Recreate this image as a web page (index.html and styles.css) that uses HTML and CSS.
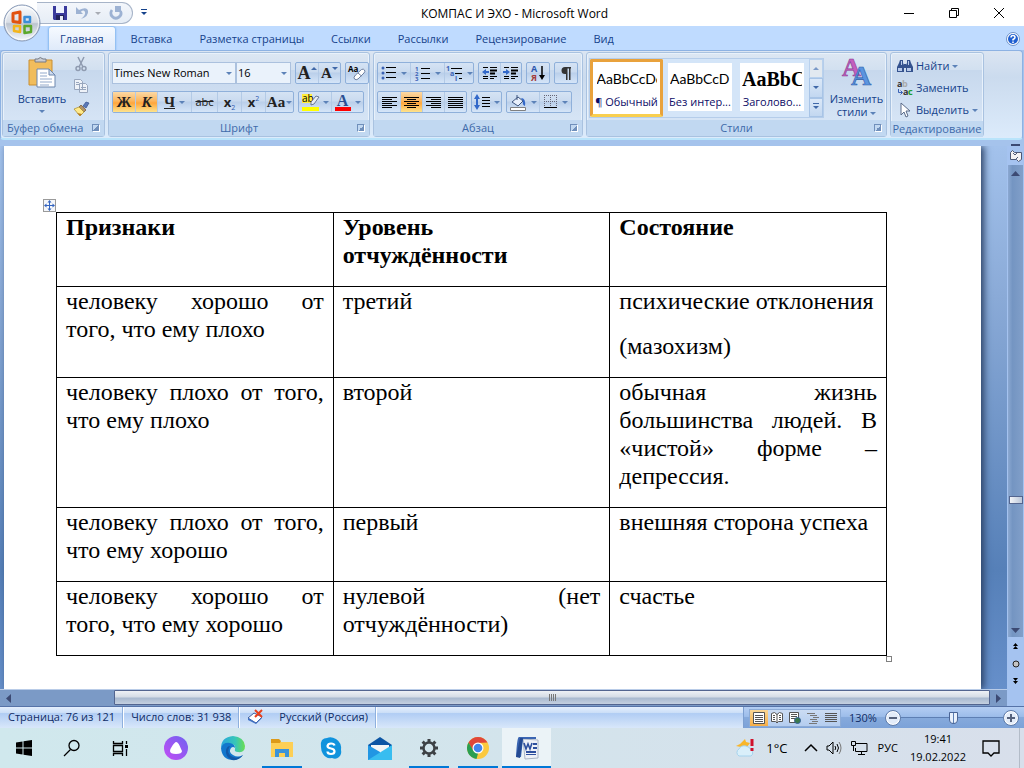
FILE: index.html
```
<!DOCTYPE html>
<html lang="ru">
<head>
<meta charset="UTF-8">
<meta name="viewport" content="width=device-width, initial-scale=1.0">
<title>КОМПАС И ЭХО - Microsoft Word</title>
<link rel="stylesheet" href="styles.css">
</head>
<body>

<header class="titlebar">
  <button class="office-button" aria-label="Кнопка Office">
    <svg width="38" height="38" viewBox="0 0 38 38">
      <defs>
        <linearGradient id="orb" x1="0" y1="0" x2="0" y2="1">
          <stop offset="0" stop-color="#fafcfe"/><stop offset=".48" stop-color="#d9dee6"/>
          <stop offset=".52" stop-color="#bcc4d0"/><stop offset="1" stop-color="#f4f7fb"/>
        </linearGradient>
      </defs>
      <circle cx="19" cy="19" r="18" fill="url(#orb)" stroke="#8496b4"/>
      <circle cx="19" cy="19" r="16.500" fill="none" stroke="#fff" opacity=".7"/>
      <g fill="none" stroke-width="3" stroke-linejoin="round">
        <path d="M10 9.500l7-1.500v10.500l-7-1z" stroke="#e2520f"/>
        <path d="M21.500 13h5.500v5h-5.500z" stroke="#3c8ed8" stroke-width="2.500"/>
        <path d="M11 22h6v6l-6-1z" stroke="#f3b51b" stroke-width="2.500"/>
        <path d="M21.500 22h6.500v6l-6.500 1z" stroke="#5ba82c" stroke-width="2.500"/>
      </g>
    </svg>
  </button>
  <div class="quick-access">
    <button aria-label="Сохранить">
      <svg width="14" height="14" viewBox="0 0 14 14"><path d="M0 0h14v14H1L0 13z" fill="#3a3a9c"/><path d="M3 0h8v7H3z" fill="#eef2ff"/><path d="M3 9h8v5H3z" fill="#23235c"/><path d="M7 10h3v4H7z" fill="#e8ecf8"/></svg>
    </button>
    <button aria-label="Отменить">
      <svg width="14" height="14" viewBox="0 0 14 14"><path d="M1 1v7h7L5.800 5.800Q9 3 10 6T6 13Q14 10 13 5T4 4z" fill="#9db2d3"/></svg>
      <span class="arrow pale"></span>
    </button>
    <button aria-label="Вернуть">
      <svg width="14" height="14" viewBox="0 0 14 14"><path d="M11.500 5A5 5 0 1 1 3 4" fill="none" stroke="#9db2d3" stroke-width="2.800"/><path d="M6 0h6v6H6z" fill="#9db2d3"/></svg>
    </button>
  </div>
  <button class="customize" aria-label="Настройка панели"><span class="arrow"></span></button>
  <h1>КОМПАС И ЭХО - Microsoft Word</h1>
  <div class="window-buttons">
    <button aria-label="Свернуть"><svg width="10" height="10"><path d="M0 5.500h10" stroke="#000"/></svg></button>
    <button aria-label="Развернуть"><svg width="10" height="10" fill="none" stroke="#000"><path d="M.5 2.500h7v7h-7zM2.500 2.500v-2h7v7h-2"/></svg></button>
    <button aria-label="Закрыть"><svg width="10" height="10"><path d="M0 0l10 10M10 0L0 10" stroke="#000"/></svg></button>
  </div>
</header>

<nav class="tabs">
  <a href="#" class="active">Главная</a>
  <a href="#">Вставка</a>
  <a href="#">Разметка страницы</a>
  <a href="#">Ссылки</a>
  <a href="#">Рассылки</a>
  <a href="#">Рецензирование</a>
  <a href="#">Вид</a>
  <button class="help" aria-label="Справка"><svg width="14" height="14" viewBox="0 0 14 14"><circle cx="7" cy="7" r="6.500" fill="#fff" stroke="#6f93c9"/><circle cx="7" cy="7" r="5" fill="#1f5fd0"/><path d="M5 5.500Q5 3.500 7 3.500T9 5.500Q9 6.500 7 7.500V8.500M7 9.500v1.500" fill="none" stroke="#fff" stroke-width="1.500"/></svg></button>
</nav>

<div class="ribbon">
  <section class="group clipboard">
    <div class="group-body">
      <button class="big">
        <svg width="28" height="31" viewBox="0 0 28 31"><path d="M1 3h23v25H1z" fill="#f1bd5c" stroke="#c98f32"/><path d="M7 5V2h3q2-3 5 0h3v3z" fill="#c9ccd2" stroke="#767b85"/><path d="M9 12h12l6 6v12H9z" fill="#fff" stroke="#6d87ae"/><path d="M21 12v6h6z" fill="#cfdcef" stroke="#6d87ae"/><path d="M12 16h7M12 19h7M12 22h12M12 25h12M12 28h9" stroke="#92a9cb"/></svg>
        <span>Вставить</span>
        <span class="arrow"></span>
      </button>
      <div class="stack">
        <button aria-label="Вырезать"><svg width="16" height="16" viewBox="0 0 16 16" fill="none" stroke="#8f9bb0" stroke-width="1.500"><path d="M5 1l5 10M11 1L6 11"/><circle cx="5" cy="12.500" r="2"/><circle cx="11" cy="12.500" r="2"/></svg></button>
        <button aria-label="Копировать"><svg width="16" height="16" viewBox="0 0 16 16" fill="#eef2f8" stroke="#98a6bd"><path d="M1.500 1.500h6l2 2v8h-8zM6.500 5.500h6l2 2v7h-8z"/><path d="M3 4.500h3M3 6.500h3M8 9.500h5M8 11.500h5"/></svg></button>
        <button aria-label="Формат по образцу"><svg width="16" height="16" viewBox="0 0 16 16"><path d="M10 5l3-4 3 1-3 5z" fill="#5b79b8" stroke="#34508c" stroke-width=".7"/><path d="M8 4l5 5-2 2-5-5z" fill="#b0926a" stroke="#77552a" stroke-width=".7"/><path d="M6 6l5 5-4 4-6-7z" fill="#ffe98a" stroke="#a98b22" stroke-width=".7"/><path d="M3 11l4 4 2-2-5-1z" fill="#b47b22"/></svg></button>
      </div>
    </div>
    <h2>Буфер обмена<button class="launcher" aria-label="Параметры буфера обмена"></button></h2>
  </section>

  <section class="group font">
    <div class="group-body rows">
      <div class="row">
        <div class="combos">
          <span class="combo name"><select aria-label="Шрифт"><option>Times New Roman</option></select></span>
          <span class="combo size"><select aria-label="Размер шрифта"><option>16</option></select></span>
        </div>
        <div class="set">
          <button class="serif" aria-label="Увеличить размер"><b class="grow">A</b><i class="tri up"></i></button>
          <button class="serif" aria-label="Уменьшить размер"><b>A</b><i class="tri down"></i></button>
        </div>
        <div class="set">
          <button aria-label="Очистить формат"><svg width="18" height="18" viewBox="0 0 18 18"><path d="M7.500 11l6-5.500q2-1 3 .5t-.5 3L10 15q-2 1.500-3.500 0T7.500 11z" fill="#fff" stroke="#6d7f9f"/><path d="M10 9l3.500 3" stroke="#6d7f9f"/><text x="0" y="8" font-size="8" font-weight="700">Aa</text></svg></button>
        </div>
      </div>
      <div class="row">
        <div class="set">
          <button class="serif on"><b>Ж</b></button>
          <button class="serif on"><b><em>К</em></b></button>
          <button class="serif w34"><b><u>Ч</u></b><span class="arrow"></span></button>
          <button class="w26"><s>abc</s></button>
          <button class="w25" aria-label="Подстрочный знак"><b>x</b><sub>2</sub></button>
          <button class="w25" aria-label="Надстрочный знак"><b>x</b><sup>2</sup></button>
          <button class="serif case"><b>Aa</b><span class="arrow"></span></button>
        </div>
        <div class="set">
          <button class="w33" aria-label="Цвет выделения"><svg width="17" height="17" viewBox="0 0 17 17"><path d="M0 0h10v9H0z" fill="#ffee3c"/><text x="0" y="8" font-size="10">ab</text><path d="M9 8l5-6 3 1-5 7-3 1z" fill="#e9eef7" stroke="#52607c" stroke-width=".8"/><path d="M0 13h17v4H0z" fill="#ff0"/></svg><span class="arrow"></span></button>
          <button class="w33 font-color" aria-label="Цвет текста"><b>A</b><span class="arrow"></span></button>
        </div>
      </div>
    </div>
    <h2>Шрифт<button class="launcher" aria-label="Параметры шрифта"></button></h2>
  </section>

  <section class="group paragraph">
    <div class="group-body rows">
      <div class="row">
        <div class="set">
          <button class="w33" aria-label="Маркеры"><svg width="16" height="14" viewBox="0 0 16 14"><g fill="#3b62b5"><circle cx="2" cy="2" r="1.500"/><circle cx="2" cy="7" r="1.500"/><circle cx="2" cy="12" r="1.500"/></g><path d="M5 1.500h10M5 6.500h10M5 11.500h10" stroke="#000"/></svg><span class="arrow"></span></button>
          <button class="w34" aria-label="Нумерация"><svg width="16" height="15" viewBox="0 0 16 15"><g fill="#3b62b5" font-size="6" font-weight="700"><text x="0" y="5">1</text><text x="0" y="10">2</text><text x="0" y="15">3</text></g><path d="M6 2.500h9M6 7.500h9M6 12.500h9" stroke="#000"/></svg><span class="arrow"></span></button>
          <button class="w30" aria-label="Многоуровневый список"><svg width="17" height="15" viewBox="0 0 17 15"><g fill="#3b62b5" font-size="7" font-weight="700"><text x="0" y="5">1</text><text x="4" y="10">a</text><text x="9" y="15">i</text></g><path d="M5 2.500h11M9 7.500h7M13 12.500h3" stroke="#000"/></svg><span class="arrow"></span></button>
        </div>
        <div class="set">
          <button class="w22" aria-label="Уменьшить отступ"><svg width="16" height="14" viewBox="0 0 16 14"><path d="M1 1.500h5M8 1.500h7M8 10.500h7M1 10.500h5M8 12.500h4M1 12.500h5" stroke="#000"/><path d="M8 4.500h7M8 7.500h5" stroke="#000" stroke-width="2"/><path d="M7 5H4V3L0 6l4 3V7h3z" fill="#3268c9"/></svg></button>
          <button class="w22" aria-label="Увеличить отступ"><svg width="16" height="14" viewBox="0 0 16 14"><path d="M1 1.500h5M8 1.500h7M8 10.500h7M1 10.500h5M8 12.500h4M1 12.500h5" stroke="#000"/><path d="M8 4.500h7M8 7.500h5" stroke="#000" stroke-width="2"/><path d="M0 5h3V3l4 3-4 3V7H0z" fill="#3268c9"/></svg></button>
        </div>
        <div class="set">
          <button aria-label="Сортировка"><svg width="16" height="18" viewBox="0 0 16 18" font-weight="700"><text x="1" y="8" font-size="9" fill="#2c58ae">A</text><text x="1" y="17" font-size="9" fill="#a33c3c">Я</text><path d="M12 2v10" stroke="#000" stroke-width="1.500"/><path d="M9 11h6l-3 5z"/></svg></button>
        </div>
        <div class="set">
          <button aria-label="Знаки абзаца"><svg width="12" height="14" viewBox="0 0 12 14"><path d="M11 1H5a3.500 3.500 0 0 0 0 7h1v6h1.500V2.500H9V14h1.500V2.500H11z" fill="#333"/></svg></button>
        </div>
      </div>
      <div class="row">
        <div class="set">
          <button aria-label="По левому краю"><svg width="15" height="13" stroke="#000"><path d="M0 1.500h15M0 3.500h10M0 5.500h15M0 7.500h10M0 9.500h15M0 11.500h10"/></svg></button>
          <button class="on" aria-label="По центру"><svg width="15" height="13" stroke="#000"><path d="M0 1.500h15M3 3.500h9M0 5.500h15M3 7.500h9M0 9.500h15M3 11.500h9"/></svg></button>
          <button aria-label="По правому краю"><svg width="15" height="13" stroke="#000"><path d="M0 1.500h15M5 3.500h10M0 5.500h15M5 7.500h10M0 9.500h15M5 11.500h10"/></svg></button>
          <button aria-label="По ширине"><svg width="15" height="13" stroke="#000"><path d="M0 1.500h15M0 3.500h15M0 5.500h15M0 7.500h15M0 9.500h15M0 11.500h15"/></svg></button>
        </div>
        <div class="set">
          <button class="w30" aria-label="Междустрочный интервал"><svg width="16" height="16" viewBox="0 0 16 16"><path d="M3 0l3 5H4v6h2l-3 5-3-5h2V5H0z" fill="#3268c9"/><path d="M8 3.500h8M8 6.500h8M8 9.500h8M8 12.500h8" stroke="#000"/></svg><span class="arrow"></span></button>
        </div>
        <div class="set">
          <button class="w33" aria-label="Заливка"><svg width="17" height="17" viewBox="0 0 17 17"><path d="M2 8l6-5 5 4-5 5z" fill="#e9f0fb" stroke="#3d557f"/><path d="M7 6V1" stroke="#3d557f"/><path d="M11 4q5 0 4 8-3-1-2-5z" fill="#3268c9"/><path d="M.5 13.500h15v3H.5z" fill="#fff" stroke="#808080"/></svg><span class="arrow"></span></button>
          <button class="w33" aria-label="Границы"><svg width="14" height="14"><path d="M.5 0v12M6.500 0v12M12.500 0v12M0 .5h13M0 6.500h13" stroke="#667" stroke-dasharray="1 1"/><path d="M0 12.500h13" stroke="#000"/></svg><span class="arrow"></span></button>
        </div>
      </div>
    </div>
    <h2>Абзац<button class="launcher" aria-label="Параметры абзаца"></button></h2>
  </section>

  <section class="group styles">
    <div class="group-body">
      <div class="gallery">
        <button class="style selected"><span class="sample">AaBbCcDc</span><span>¶ Обычный</span></button>
        <button class="style"><span class="sample">AaBbCcD</span><span>Без интер...</span></button>
        <button class="style"><span class="sample heading">AaBbC</span><span>Заголово...</span></button>
        <div class="gallery-scroll">
          <button disabled aria-label="Вверх"><i class="tri up"></i></button>
          <button aria-label="Вниз"><i class="tri down"></i></button>
          <button class="more" aria-label="Ещё"><i class="tri down"></i></button>
        </div>
      </div>
      <button class="big change">
        <svg width="30" height="29" viewBox="0 0 30 29" font-family="Liberation Serif" font-weight="700"><text x="0" y="19" font-size="26" fill="#c45fbd" stroke="#8a3b92" stroke-width=".6">A</text><text x="9" y="28" font-size="28" fill="#5b94e0" stroke="#2b5aa8" stroke-width=".6">A</text></svg>
        <span>Изменить<br>стили <span class="arrow"></span></span>
      </button>
    </div>
    <h2>Стили<button class="launcher" aria-label="Окно стилей"></button></h2>
  </section>

  <section class="group editing">
    <div class="group-body">
      <button><svg width="16" height="16" viewBox="0 0 16 16"><path d="M3 2h3v3l1 2v7H0V9l2-4zM10 2h3l1 3 2 4v5H9V7l1-2z" fill="#35538f"/><path d="M7 6h2v4H7z" fill="#35538f"/><path d="M1 10h4v3H1zM10 10h4v3h-4zM4 3h1v4H4zM11 3h1v4h-1z" fill="#b8caea"/></svg>Найти <span class="arrow"></span></button>
      <button><svg width="16" height="16" viewBox="0 0 16 16" font-size="9" font-weight="700"><text x="0" y="7" fill="#333">a</text><text x="5" y="7" fill="#aaa">b</text><text x="6" y="15" fill="#333">a</text><text x="11" y="15" fill="#1a9a2a">c</text><path d="M1.500 9v3.500h4M3.500 10.500l2 2-2 2" fill="none" stroke="#3b62b5"/></svg>Заменить</button>
      <button><svg width="16" height="16" viewBox="0 0 16 16"><path d="M4 1v12l3-3 2 5 2-1-2-5h4z" fill="#fff" stroke="#5b6b88"/></svg>Выделить <span class="arrow"></span></button>
    </div>
    <h2>Редактирование</h2>
  </section>
</div>

<main class="workspace">
  <div class="document">
    <article class="page">
      <div class="table-wrap">
        <span class="move-handle"><svg width="11" height="11" viewBox="0 0 11 11"><path d="M5.500 1v9M1 5.500h9" stroke="#3465c0"/><path d="M5.500 0l2 2.500h-4zM5.500 11l2-2.500h-4zM0 5.500l2.500-2v4zM11 5.500l-2.500-2v4z" fill="#3465c0"/></svg></span>
        <table>
          <thead>
            <tr>
              <th><p>Признаки</p></th>
              <th><p>Уровень отчуждённости</p></th>
              <th><p>Состояние</p></th>
            </tr>
          </thead>
          <tbody>
            <tr>
              <td><p>человеку хорошо от того, что ему плохо</p></td>
              <td><p>третий</p></td>
              <td><p>психические отклонения</p><p>(мазохизм)</p></td>
            </tr>
            <tr>
              <td><p>человеку плохо от того, что ему плохо</p></td>
              <td><p>второй</p></td>
              <td><p>обычная жизнь большинства людей. В «чистой» форме – депрессия.</p></td>
            </tr>
            <tr>
              <td><p>человеку плохо от того, что ему хорошо</p></td>
              <td><p>первый</p></td>
              <td><p>внешняя сторона успеха</p></td>
            </tr>
            <tr>
              <td><p>человеку хорошо от того, что ему хорошо</p></td>
              <td><p>нулевой (нет отчуждённости)</p></td>
              <td><p>счастье</p></td>
            </tr>
          </tbody>
        </table>
        <span class="size-handle"></span>
      </div>
    </article>
  </div>

  <div class="hscroll">
    <button aria-label="Влево"><svg width="5" height="9"><path d="M5 0v9L0 4.500z" fill="#3c4a73"/></svg></button>
    <div class="htrack"><div class="hthumb"></div></div>
    <button aria-label="Вправо"><svg width="5" height="9"><path d="M0 0v9l5-4.500z" fill="#3c4a73"/></svg></button>
  </div>

  <div class="vscroll">
    <span class="splitter"></span>
    <button class="ruler" aria-label="Линейка"><svg width="12" height="12" viewBox="0 0 12 12"><path d="M.5 2.500l2-2 2 2h7v7l-3 2-2-2h-6z" fill="#f4f2f4" stroke="#4d5876"/><path d="M3 3l2 2 2-2M6 9l2-2" fill="none" stroke="#4d5876"/></svg></button>
    <div class="vtrack">
      <svg width="9" height="5"><path d="M0 5h9L4.500 0z" fill="#3c4a73"/></svg>
      <div class="vthumb"></div>
      <svg class="down" width="9" height="5"><path d="M0 0h9L4.500 5z" fill="#3c4a73"/></svg>
    </div>
    <div class="browse">
      <button aria-label="Предыдущая страница"><svg width="5" height="7"><path d="M2.500 0L5 3H0zM2.500 3L5 6H0z"/></svg></button>
      <button aria-label="Выбор объекта"><svg width="8" height="8"><circle cx="4" cy="4" r="3" fill="#c4c4c4" stroke="#222"/></svg></button>
      <button aria-label="Следующая страница"><svg width="5" height="7"><path d="M2.500 4L5 1H0zM2.500 7L5 4H0z"/></svg></button>
    </div>
  </div>
</main>

<footer class="statusbar">
  <span class="cell">Страница: 76 из 121</span>
  <span class="cell">Число слов: 31 938</span>
  <span class="cell language">
    <svg width="17" height="15" viewBox="0 0 17 15"><path d="M1 9l6-5 8 4-6 6z" fill="#fff" stroke="#3d5d9e"/><path d="M1 9v2l8 4 6-6V8l-6 6z" fill="#3d6fc4"/><path d="M8 1l7 7M15 1L8 8" stroke="#e8401c" stroke-width="2"/></svg>
    Русский (Россия)
  </span>
  <div class="status-right">
    <div class="views">
      <button class="on" aria-label="Разметка страницы"><svg width="12" height="12" fill="#fff" stroke="#555"><path d="M.5.5h11v11H.5zM2 3.500h8M2 5.500h8M2 7.500h8M2 9.500h8"/></svg></button>
      <button aria-label="Режим чтения"><svg width="12" height="12" fill="#fff" stroke="#555"><path d="M.5 1.500l3-1 2.500 2 2.500-2 3 1v8h-4L6 11 4.500 9.500h-4zM6 2v9M2 3.500h2M2 5.500h2M2 7.500h2M8 3.500h2M8 5.500h2M8 7.500h2"/></svg></button>
      <button aria-label="Веб-документ"><svg width="12" height="12"><path d="M.5.5h9v10h-9zM2 2.500h6M2 4.500h6M2 6.500h4" fill="#fff" stroke="#555"/><circle cx="8.500" cy="8.500" r="3" fill="#3b7a4d" stroke="#34609a"/></svg></button>
      <button aria-label="Структура"><svg width="12" height="12" stroke="#777"><path d="M0 1.500h8M3 3.500h7M6 5.500h6M3 7.500h7M5 9.500h6M2 11.500h8"/></svg></button>
      <button aria-label="Черновик"><svg width="12" height="12" stroke="#555"><path d="M0 1.500h12M0 3.500h12M0 5.500h12M0 7.500h12M0 9.500h12"/></svg></button>
    </div>
    <label for="zoom">130%</label>
    <button class="round" aria-label="Мельче"><svg width="8" height="8"><path d="M0 4h8" stroke="#56627c" stroke-width="2"/></svg></button>
    <input type="range" id="zoom" min="0" max="100" value="52">
    <button class="round" aria-label="Крупнее"><svg width="8" height="8"><path d="M0 4h8M4 0v8" stroke="#56627c" stroke-width="2"/></svg></button>
  </div>
</footer>

<div class="taskbar">
  <button class="system" aria-label="Пуск"><svg width="16" height="16" viewBox="0 0 16 16"><path d="M0 2.500l6.500-1v6H0zM7.500 1.300L16 0v7.500H7.500zM0 8.500h6.500v6l-6.500-1zM7.500 8.500H16V16l-8.500-1.300z"/></svg></button>
  <button class="system" aria-label="Поиск"><svg width="18" height="18" viewBox="0 0 18 18" fill="none" stroke="#000" stroke-width="1.300"><circle cx="11" cy="6.500" r="5"/><path d="M7.500 10.500L1 17"/></svg></button>
  <button class="system" aria-label="Представление задач"><svg width="17" height="17" viewBox="0 0 17 17" fill="none" stroke="#000"><path d="M1.500 1v2.500h9V1M1.500 16v-2.500h9V16M1.500 5.500h9v6h-9zM14.500 1v3M14.500 9v7" stroke-width="1.300"/><path d="M13 5h3v3h-3z" fill="#000" stroke="none"/></svg></button>
  <button class="alice" aria-label="Алиса"><svg width="24" height="24" viewBox="0 0 24 24"><defs><linearGradient id="al" x1="0" y1="1" x2="1" y2="0"><stop offset="0" stop-color="#c44df5"/><stop offset="1" stop-color="#6e62f0"/></linearGradient></defs><circle cx="12" cy="12" r="12" fill="url(#al)"/><path d="M12 6q2 0 3.500 3.500T18 15q0 3-6 3t-6-3q0-2 2.500-5.500T12 6z" fill="#fff"/></svg></button>
  <button aria-label="Edge"><svg width="24" height="24" viewBox="0 0 24 24"><defs><linearGradient id="ed" x1="0" y1="0" x2="1" y2="0"><stop offset="0" stop-color="#2aa6dd"/><stop offset=".6" stop-color="#37c6b8"/><stop offset="1" stop-color="#6ade50"/></linearGradient></defs><path d="M0 12Q0 1 12 0q11 1 12 10 0 7-7 6-4 0-3-3 1-4-3-5Q3 7 0 12z" fill="url(#ed)"/><path d="M0 12q2-6 9-5 5 1 5 5-2-2-4 0-3 4 2 7 5 3 10 0-4 5-10 5Q1 24 0 12z" fill="#1277cd"/><path d="M9 10q-4 6 1 10 6 4 12-1Q18 25 11 24 4 21 5 14q1-4 4-4z" fill="#1258a8"/></svg></button>
  <button class="running" aria-label="Проводник"><svg width="22" height="19" viewBox="0 0 22 19"><path d="M0 1h8l2 2h12v15H0z" fill="#fdcf55"/><path d="M0 0h8l2 2-1 2H0z" fill="#dd9a19"/><path d="M4 18v-8h14v8h-4v-4H8v4z" fill="#3c93d9"/></svg></button>
  <button aria-label="Skype"><svg width="22" height="23" viewBox="0 0 22 23"><path d="M7 1q4-2 9 1 6 4 5 11 1 4-2 7-3 3-7 1-6 1-9-4-2-3-2-7-1-4 1-7 2-2 5-2z" fill="#1093dd"/><path d="M14.500 8.500Q14 6.500 11 6.500T7.500 9q0 2 3.500 2.500t3.500 3q0 2.500-3.500 2.500t-3.500-2.500" fill="none" stroke="#fff" stroke-width="2.200"/></svg></button>
  <button aria-label="Почта"><svg width="24" height="23" viewBox="0 0 24 23"><path d="M0 8l12-8 12 8v4H0z" fill="#0c55a4"/><path d="M3 8h18v6l-9 5-9-5z" fill="#f3f5f6"/><path d="M0 8l12 7v8H0z" fill="#2196e3"/><path d="M24 8L0 23h24z" fill="#38bdf0"/></svg></button>
  <button class="running" aria-label="Параметры"><svg width="20" height="20" viewBox="0 0 20 20" fill="none" stroke="#3d4145"><circle cx="10" cy="10" r="5.500" stroke-width="2.500"/><path d="M10 1v3M10 16v3M1 10h3M16 10h3M3.600 3.600l2.200 2.200M14.200 14.200l2.200 2.200M3.600 16.400l2.200-2.200M14.200 5.800l2.200-2.200" stroke-width="3"/></svg></button>
  <button class="running" aria-label="Chrome"><svg width="22" height="22" viewBox="0 0 22 22"><circle cx="11" cy="11" r="11" fill="#fbc93f"/><path d="M1.500 5.500A11 11 0 0 1 20.500 5.500L11 6 6 14z" fill="#e0473a"/><path d="M1.500 5.500L6.500 14 11 16.500 9.500 22A11 11 0 0 1 1.500 5.500z" fill="#2a9e52"/><circle cx="11" cy="11" r="5.500" fill="#fff"/><circle cx="11" cy="11" r="4.300" fill="#4385ee"/></svg></button>
  <button class="running current" aria-label="Word"><svg width="24" height="24" viewBox="0 0 24 24"><path d="M8 3l15 1v18l-13 1z" fill="#eef1f7" stroke="#aab4c6"/><path d="M1 21Q2 1 4 1h17v2H8L6 21z" fill="#3a65b2"/><path d="M1 21L5 2h3L5 22z" fill="#244a93"/><path d="M18 7h4v2h-4zM18 11h4v2h-4zM11 15h10v2H11zM11 18h10v1H11z" fill="#2d4f9e"/><path d="M9 7l2 6 2-5 2 5 2-6" fill="none" stroke="#2d4f9e" stroke-width="1.600"/></svg></button>

  <div class="tray">
    <button class="weather"><svg width="22" height="20" viewBox="0 0 22 20"><path d="M10 1l1 3 4 1-3 4H6L1 8l4-2z" fill="#f8b62b"/><path d="M4 18a4 4 0 0 1 0-7q2-4 7-3 4 1 5 4a3.500 3.500 0 0 1 0 6z" fill="#d9effa" stroke="#a5d3ee"/><path d="M17 1v7M17 10v3" stroke="#d0112b" stroke-width="3"/></svg>1°C</button>
    <button aria-label="Скрытые значки"><svg width="14" height="8" viewBox="0 0 14 8"><path d="M1 7l6-6 6 6" fill="none" stroke="#000" stroke-width="1.500"/></svg></button>
    <button aria-label="Громкость"><svg width="17" height="14" viewBox="0 0 17 14" fill="none" stroke="#000"><path d="M1 5v4h2l4 4V1L3 5zM9 5q1.500 2 0 4M11 3q3 4 0 8"/><path d="M13 1q4 6 0 12" stroke="#777"/></svg></button>
    <button aria-label="Сеть"><svg width="17" height="15" viewBox="0 0 17 15" fill="none" stroke="#000"><path d="M5 2.500h11v8H4.500V7M10.500 10.500v3M7 13.500h7M.5.500h4v4h-4zM2.500 4v6"/></svg></button>
    <button class="lang">РУС</button>
    <button class="clock">19:41<br>19.02.2022</button>
    <button aria-label="Уведомления"><svg width="18" height="17" viewBox="0 0 18 17" fill="none" stroke="#000" stroke-width="1.300"><path d="M1 1h16v12h-5l-3 3-3-3H1z"/></svg></button>
  </div>
</div>

</body>
</html>
```
FILE: styles.css
```
* {
  box-sizing: border-box;
}

body {
  margin: 0;
  height: 100vh;
  display: flex;
  flex-direction: column;
  overflow: hidden;
  font-family: "Open Sans", "Noto Sans", sans-serif;
  font-size: 11px;
  line-height: 16px;
  color: #15428b;
  background: #a5c3ec;
}

button {
  display: flex;
  align-items: center;
  justify-content: center;
  margin: 0;
  padding: 0;
  border: none;
  background: none;
  font: inherit;
  color: inherit;
}

h1, h2, p {
  margin: 0;
  font-size: inherit;
  font-weight: normal;
}

svg {
  display: block;
  flex-shrink: 0;
  overflow: visible;
}

.arrow {
  display: inline-block;
  border: 3px solid transparent;
  border-top-color: #5c82b8;
  border-bottom: none;
}

.arrow.pale {
  border-top-color: #a8acb4;
}

.tri {
  border: 3px solid transparent;
}

.tri.up {
  border-top: none;
  border-bottom-color: #4068a8;
}

.tri.down {
  border-bottom: none;
  border-top-color: #4068a8;
}

/* title bar */
.titlebar {
  position: relative;
  z-index: 1;
  display: flex;
  height: 26px;
  background: #fff;
}

.office-button {
  position: absolute;
  left: 3px;
  top: 4px;
}

.quick-access {
  display: flex;
  align-items: center;
  gap: 8px;
  width: 96px;
  height: 22px;
  margin: 2px 0 0 37px;
  padding-left: 16px;
  background: linear-gradient(#f3f6fb, #e6edf6);
  border: 1px solid #a7b4c8;
  border-left: none;
  border-radius: 0 11px 11px 0;
}

.quick-access button {
  gap: 6px;
}

.customize {
  width: 22px;
}

.customize .arrow {
  position: relative;
  border-top-color: #15428b;
}

.customize .arrow::before {
  content: "";
  position: absolute;
  left: -3px;
  top: -6px;
  width: 6px;
  height: 1px;
  background: #15428b;
}

.titlebar h1 {
  flex: 1;
  padding-right: 12px;
  font-size: 12px;
  line-height: 27px;
  text-align: center;
  color: #000;
}

.window-buttons {
  display: flex;
  margin-right: 3px;
}

.window-buttons button {
  width: 45px;
  height: 25px;
}

/* tabs */
.tabs {
  display: flex;
  height: 24px;
  padding: 1px 4px 0 49px;
  background: #bfdbff;
}

.tabs a {
  padding: 0 14px 0 13px;
  line-height: 23px;
  color: #15428b;
  text-decoration: none;
}

.tabs .active {
  padding: 0 11px;
  margin-right: 3px;
  background: linear-gradient(#f6faff, #dfeafa);
  border-radius: 3px 3px 0 0;
  box-shadow: 0 0 2px 1px #85b7ef;
}

.help {
  margin-left: auto;
}

/* ribbon */
.ribbon {
  display: flex;
  gap: 3px;
  height: 90px;
  margin: 0 1px 6px 0;
  padding: 1px;
  background: linear-gradient(#dbe5f2, #cbdbee 30%, #dcebfb);
  border: 1px solid #8db2e3;
  border-bottom: 2px solid #b9e4fb;
  border-radius: 4px;
}

.group {
  display: flex;
  flex-direction: column;
  border: 1px solid #a9c2e0;
  border-radius: 3px;
  background: linear-gradient(#dde7f3, #d2e0f0 20%, #c7d8ed 21%, #dae8f8);
  box-shadow: inset 0 0 0 1px #e8f1fb;
}

.clipboard { width: 103px; }
.font { width: 262px; }
.paragraph { width: 210px; }
.styles { width: 301px; }
.editing { width: 94px; }

.group-body {
  flex: 1;
  display: flex;
}

.group h2 {
  position: relative;
  display: flex;
  height: 16px;
  align-items: center;
  justify-content: center;
  color: #3e6aaa;
  background: #c1d8f1;
  white-space: nowrap;
}

.launcher {
  position: absolute;
  right: 4px;
  width: 8px;
  height: 8px;
  border: 1px solid #6f8fbb;
  border-right-color: #fff;
  border-bottom-color: #fff;
  background: linear-gradient(135deg, transparent 50%, #6f8fbb 50%);
}

.clipboard h2 {
  justify-content: flex-start;
  padding-left: 4px;
}

.big {
  flex-direction: column;
  justify-content: flex-start;
  width: 78px;
  padding-top: 4px;
}

.big > span {
  line-height: 14px;
}

.clipboard .big > span:nth-of-type(1) {
  margin-top: 4px;
}

.clipboard .big .arrow {
  margin-top: 4px;
}

.stack {
  display: flex;
  flex-direction: column;
  justify-content: space-around;
  margin-left: -8px;
}

.rows {
  flex-direction: column;
  padding: 9px 3px 0;
  gap: 7px;
}

.row {
  display: flex;
  gap: 4px;
}

.set {
  display: flex;
  height: 22px;
  border: 1px solid #8fb0da;
  border-radius: 2px;
  background: linear-gradient(#d5e3f4, #c9daef 45%, #bacfea 50%, #d5e5f8);
}

.set button {
  width: 22px;
  gap: 4px;
  color: #222;
}

.set button + button {
  border-left: 1px solid #b3cae6;
}

.set .w22 { width: 21px; }
.set .w25 { width: 24px; }
.set .w26 { width: 26px; }
.set .w30 { width: 29px; }
.set .w33 { width: 32px; }
.set .w34 { width: 34px; }

.set .on {
  background: linear-gradient(#fcd9a5, #fbb55d 45%, #ffa63c 55%, #fde38d);
}

.serif {
  font-family: "Liberation Serif", serif;
  font-size: 15px;
}

.serif .tri {
  margin: -10px 0 0 -4px;
}

.serif .grow {
  font-size: 18px;
}

.set .case {
  width: 28px;
  gap: 1px;
}

.set sub,
.set sup {
  margin-left: -4px;
  font-size: 7px;
  line-height: 7px;
  color: #2c58ae;
}

.set sub { margin-top: 10px; }
.set sup { margin-bottom: 8px; }

.set .w25 b {
  font-size: 13px;
}

.font-color b {
  width: 16px;
  height: 17px;
  border-bottom: 4px solid #f00;
  font: bold 16px/13px "Liberation Serif", serif;
  color: #2b4f92;
}

.combos {
  display: flex;
}

.combo {
  position: relative;
  height: 22px;
}

.combo select {
  width: 100%;
  height: 22px;
  padding: 0 1px;
  border: 1px solid #abc1de;
  background: #eaf2fb;
  font: inherit;
  color: #000;
  appearance: none;
}

.combo::after {
  content: "";
  position: absolute;
  right: 4px;
  top: 10px;
  border: 3px solid transparent;
  border-top-color: #5c82b8;
  border-bottom: none;
}

.name { width: 124px; }
.size { width: 55px; }

.gallery {
  display: flex;
  gap: 2px;
  height: 60px;
  margin: 5px 3px 0 2px;
  background: #d4e5f8;
  border: 1px solid #b5cdea;
}

.style {
  flex-direction: column;
  width: 70px;
  padding: 4px 3px 6px;
  color: #0c0c66;
  white-space: nowrap;
  overflow: hidden;
  background: #fff content-box;
}

.style.selected {
  width: 73px;
  border: 3px solid #e9a23c;
  border-bottom-color: #f9cf4f;
  padding: 1px 1px 3px;
  background: #fff;
  border-radius: 2px;
}

.sample {
  width: 60px;
  overflow: hidden;
  font: 14px/30px Lato, sans-serif;
  color: #000;
  text-align: left;
}

.sample.heading {
  font: bold 20px/30px "Liberation Serif", serif;
}

.gallery-scroll {
  display: flex;
  flex-direction: column;
  width: 14px;
  margin-left: auto;
}

.gallery-scroll button {
  flex: 1;
  border: 1px solid #a8c4e6;
  background: linear-gradient(#dbe8f8, #c2d7f0);
}

.gallery-scroll button:disabled {
  background: #ececec;
  opacity: .6;
}

.more .tri {
  position: relative;
}

.more .tri::before {
  content: "";
  position: absolute;
  left: -3px;
  top: -6px;
  width: 6px;
  height: 1px;
  background: #4068a8;
}

.change {
  width: 60px;
}

.change > span {
  margin-top: 6px;
  text-align: center;
  line-height: 13px;
}

.change .arrow {
  vertical-align: middle;
}

.editing .group-body {
  flex-direction: column;
  align-items: flex-start;
  justify-content: space-around;
  padding: 2px 0 0 6px;
}

.editing button {
  gap: 3px;
  height: 22px;
}

/* workspace */
.workspace {
  flex: 1;
  min-height: 0;
  display: grid;
  grid-template-columns: 1fr 17px;
  grid-template-rows: 1fr 17px;
}

.document {
  display: flex;
  overflow: hidden;
  padding: 0 26px 0 4px;
  background: linear-gradient(#a3c2ec, #8aaad7 28%, #5680b8 78%, #668fca);
}

.page {
  flex: 1;
  padding: 66px 94px 0 52px;
  background: #fff;
  box-shadow: 3px 0 7px #2b4266;
}

.table-wrap {
  position: relative;
}

.move-handle {
  position: absolute;
  left: -13px;
  top: -13px;
  width: 13px;
  height: 13px;
  border: 1px solid #9a9a9a;
  background: #f4f6fa;
}

.size-handle {
  position: absolute;
  right: -5px;
  bottom: -6px;
  width: 6px;
  height: 6px;
  border: 1px solid #808080;
  background: #fff;
}

table {
  width: 100%;
  table-layout: fixed;
  border-collapse: collapse;
  font: 24px/28px "Liberation Serif", "Times New Roman", serif;
  color: #000;
}

th, td {
  padding: 0 9px;
  border: 1px solid #000;
  vertical-align: top;
  text-align: justify;
}

th {
  text-align: left;
}

td p, th p {
  margin-bottom: 17px;
}

th p {
  font-weight: bold;
}

.hscroll {
  grid-row: 2;
  display: flex;
  border-top: 1px solid #b9cce8;
  background: #7b9ac6;
}

.hscroll button {
  width: 17px;
}

.htrack {
  flex: 1;
}

.hthumb {
  height: 15px;
  margin-left: 10%;
  border: 1px solid #53658f;
  border-radius: 1px;
  background:
    repeating-linear-gradient(90deg, #777 0 1px, transparent 1px 2px) center / 7px 7px no-repeat,
    linear-gradient(#eef1f5, #d5dce6 45%, #a9b9cf 55%, #c4d0e0);
}

.vscroll {
  grid-column: 2;
  grid-row: 1 / 3;
  display: flex;
  flex-direction: column;
  align-items: center;
  background: #a5c3f0;
}

.splitter {
  width: 9px;
  height: 2px;
  margin-top: -2px;
  background: #3c4a73;
}

.ruler {
  height: 19px;
}

.vtrack {
  flex: 1;
  display: grid;
  grid-template-rows: auto 18fr auto 7fr auto;
  justify-items: center;
  width: 15px;
  padding: 6px 0 4px;
  background: linear-gradient(90deg, #8ba8d1, #7495c2 30%, #819fc9);
}

.vthumb {
  grid-row: 3;
  width: 14px;
  height: 8px;
  border: 1px solid #53658f;
  background: linear-gradient(90deg, #f2f4f8, #b9c6d9);
}

.vtrack .down {
  grid-row: 5;
}

.browse {
  height: 69px;
  padding: 6px 0 22px;
  display: flex;
  flex-direction: column;
  align-items: center;
  justify-content: space-between;
}

/* status bar */
.statusbar {
  display: flex;
  height: 22px;
  border-top: 1px solid #5673a8;
  background: linear-gradient(#e4effd, #c9ddf7 30%, #b1cdf4 31%, #d8e7fa);
  color: #0f2c66;
}

.cell {
  display: flex;
  align-items: center;
  padding: 0 7px 2px 8px;
  border-right: 1px solid #8eb0de;
  box-shadow: 1px 0 #fff;
}

.language {
  gap: 15px;
}

.status-right {
  margin-left: auto;
  display: flex;
  align-items: center;
  width: 281px;
  padding: 0 5px;
  border-left: 1px solid #7d9fd0;
  background: linear-gradient(#b4cef3, #9dbdea 45%, #86aadc 50%, #7ca2d8);
}

.views {
  display: flex;
  border: 1px solid #8cabd6;
  background: linear-gradient(#cbdcf3, #b4cdef);
}

.views button {
  width: 18px;
  height: 16px;
}

.views .on {
  background: linear-gradient(#fbd795, #f6ae47);
}

.status-right label {
  margin: 0 8px;
}

.round {
  width: 16px;
  height: 16px;
  border: 1px solid #5d7aa8;
  border-radius: 50%;
  background: #e3ecf9;
  box-shadow: inset 0 0 0 1px #fff;
}

#zoom {
  flex: 1;
  min-width: 0;
  height: 16px;
  margin: 0;
  appearance: none;
  background: linear-gradient(#5d7fb3, #5d7fb3) center / 100% 1px no-repeat;
}

#zoom::-webkit-slider-thumb {
  appearance: none;
  width: 9px;
  height: 12px;
  border: 1px solid #4a6596;
  border-radius: 1px 1px 5px 5px;
  background: linear-gradient(90deg, transparent 3px, #5d7fb3 3px 4px, transparent 4px), #e9f1fc;
}

/* taskbar */
.taskbar {
  display: flex;
  height: 40px;
  background: linear-gradient(90deg, #d0e8ed, #d3e4ec 50%, #d8dfeb);
  color: #000;
}

.taskbar > button {
  position: relative;
  width: 49px;
}

.taskbar > .system {
  width: 48px;
}

.taskbar > .alice {
  width: 64px;
}

.running::after {
  content: "";
  position: absolute;
  left: 5px;
  right: 4px;
  bottom: 0;
  height: 2px;
  background: #0078d7;
}

.current {
  background: #ebf3f7;
}

.current::after {
  left: 0;
  right: 0;
}

.tray {
  display: flex;
  margin-left: auto;
  margin-right: 4px;
  padding-right: 19px;
  gap: 8px;
  border-right: 1px solid #b3bcc8;
}

.weather {
  gap: 9px;
  margin-right: 8px;
  font-size: 13px;
}

.lang {
  margin-left: 2px;
}

.clock {
  margin: 0 8px 0 4px;
  line-height: 18px;
}
```
